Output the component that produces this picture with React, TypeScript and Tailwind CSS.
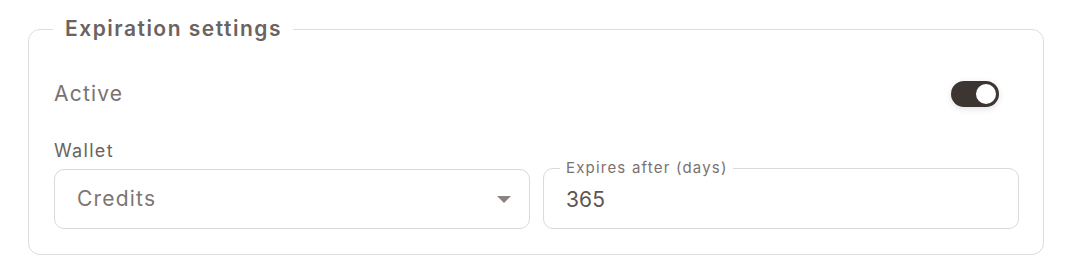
import React, { useState } from "react";

export default function App() {
  const [active, setActive] = useState(true);
  const [days, setDays] = useState("365");

  return (
    <div className="bg-white w-[1076px] h-[272px] pt-[15px] pl-[28px] font-['Inter',sans-serif]">
      <fieldset className="w-[1016px] border border-[#dfdcdb] rounded-[12px]">
        <legend className="ml-[24px] pl-[12px] pr-[11px] text-[21px] leading-[28px] tracking-[1.5px] font-semibold text-[#6b6360]">
          Expiration settings
        </legend>

        <div className="pl-[25px] pr-[24px] pt-[31px] pb-[25px]">
          {/* Active toggle row */}
          <div className="flex items-center justify-between h-[40px]">
            <span className="text-[21px] tracking-[1.2px] text-[#7a7270]">Active</span>
            <button
              type="button"
              onClick={() => setActive(!active)}
              className={`mr-[20px] w-[48px] h-[26px] rounded-full p-[3px] flex items-center shadow-[0_2px_6px_rgba(0,0,0,0.12)] ${
                active ? "bg-[#3d3532] justify-end" : "bg-[#d6d3d2] justify-start"
              }`}
            >
              <span className="block w-[20px] h-[20px] rounded-full bg-white" />
            </button>
          </div>

          {/* Wallet + expiry */}
          <div className="mt-[25px] grid grid-cols-2 gap-x-[13px] items-end">
            <div className="flex flex-col">
              <label className="text-[18px] leading-[24px] tracking-[1.3px] text-[#6b6360] mb-[6px]">Wallet</label>
              <div className="h-[60px] border border-[#dcd9d8] rounded-[10px] pl-[22px] pr-[18px] flex items-center justify-between">
                <span className="text-[21px] tracking-[1.2px] text-[#7d7572]">Credits</span>
                <svg width="14" height="7" viewBox="0 0 14 7" className="mt-[1px]">
                  <path d="M0 0 L14 0 L7 7 Z" fill="#8b8381" />
                </svg>
              </div>
            </div>

            <fieldset className="h-[70px] border border-[#dcd9d8] rounded-[10px] pl-[22px] pr-[16px]">
              <legend className="ml-[-6px] pl-[6px] pr-[5px] text-[15px] leading-[18px] tracking-[1.2px] text-[#7a7270]">
                Expires after (days)
              </legend>
              <input
                value={days}
                onChange={(e) => setDays(e.target.value)}
                className="w-full h-[44px] outline-none text-[21px] tracking-[0.1px] text-[#5d5552] bg-transparent"
              />
            </fieldset>
          </div>
        </div>
      </fieldset>
    </div>
  );
}
